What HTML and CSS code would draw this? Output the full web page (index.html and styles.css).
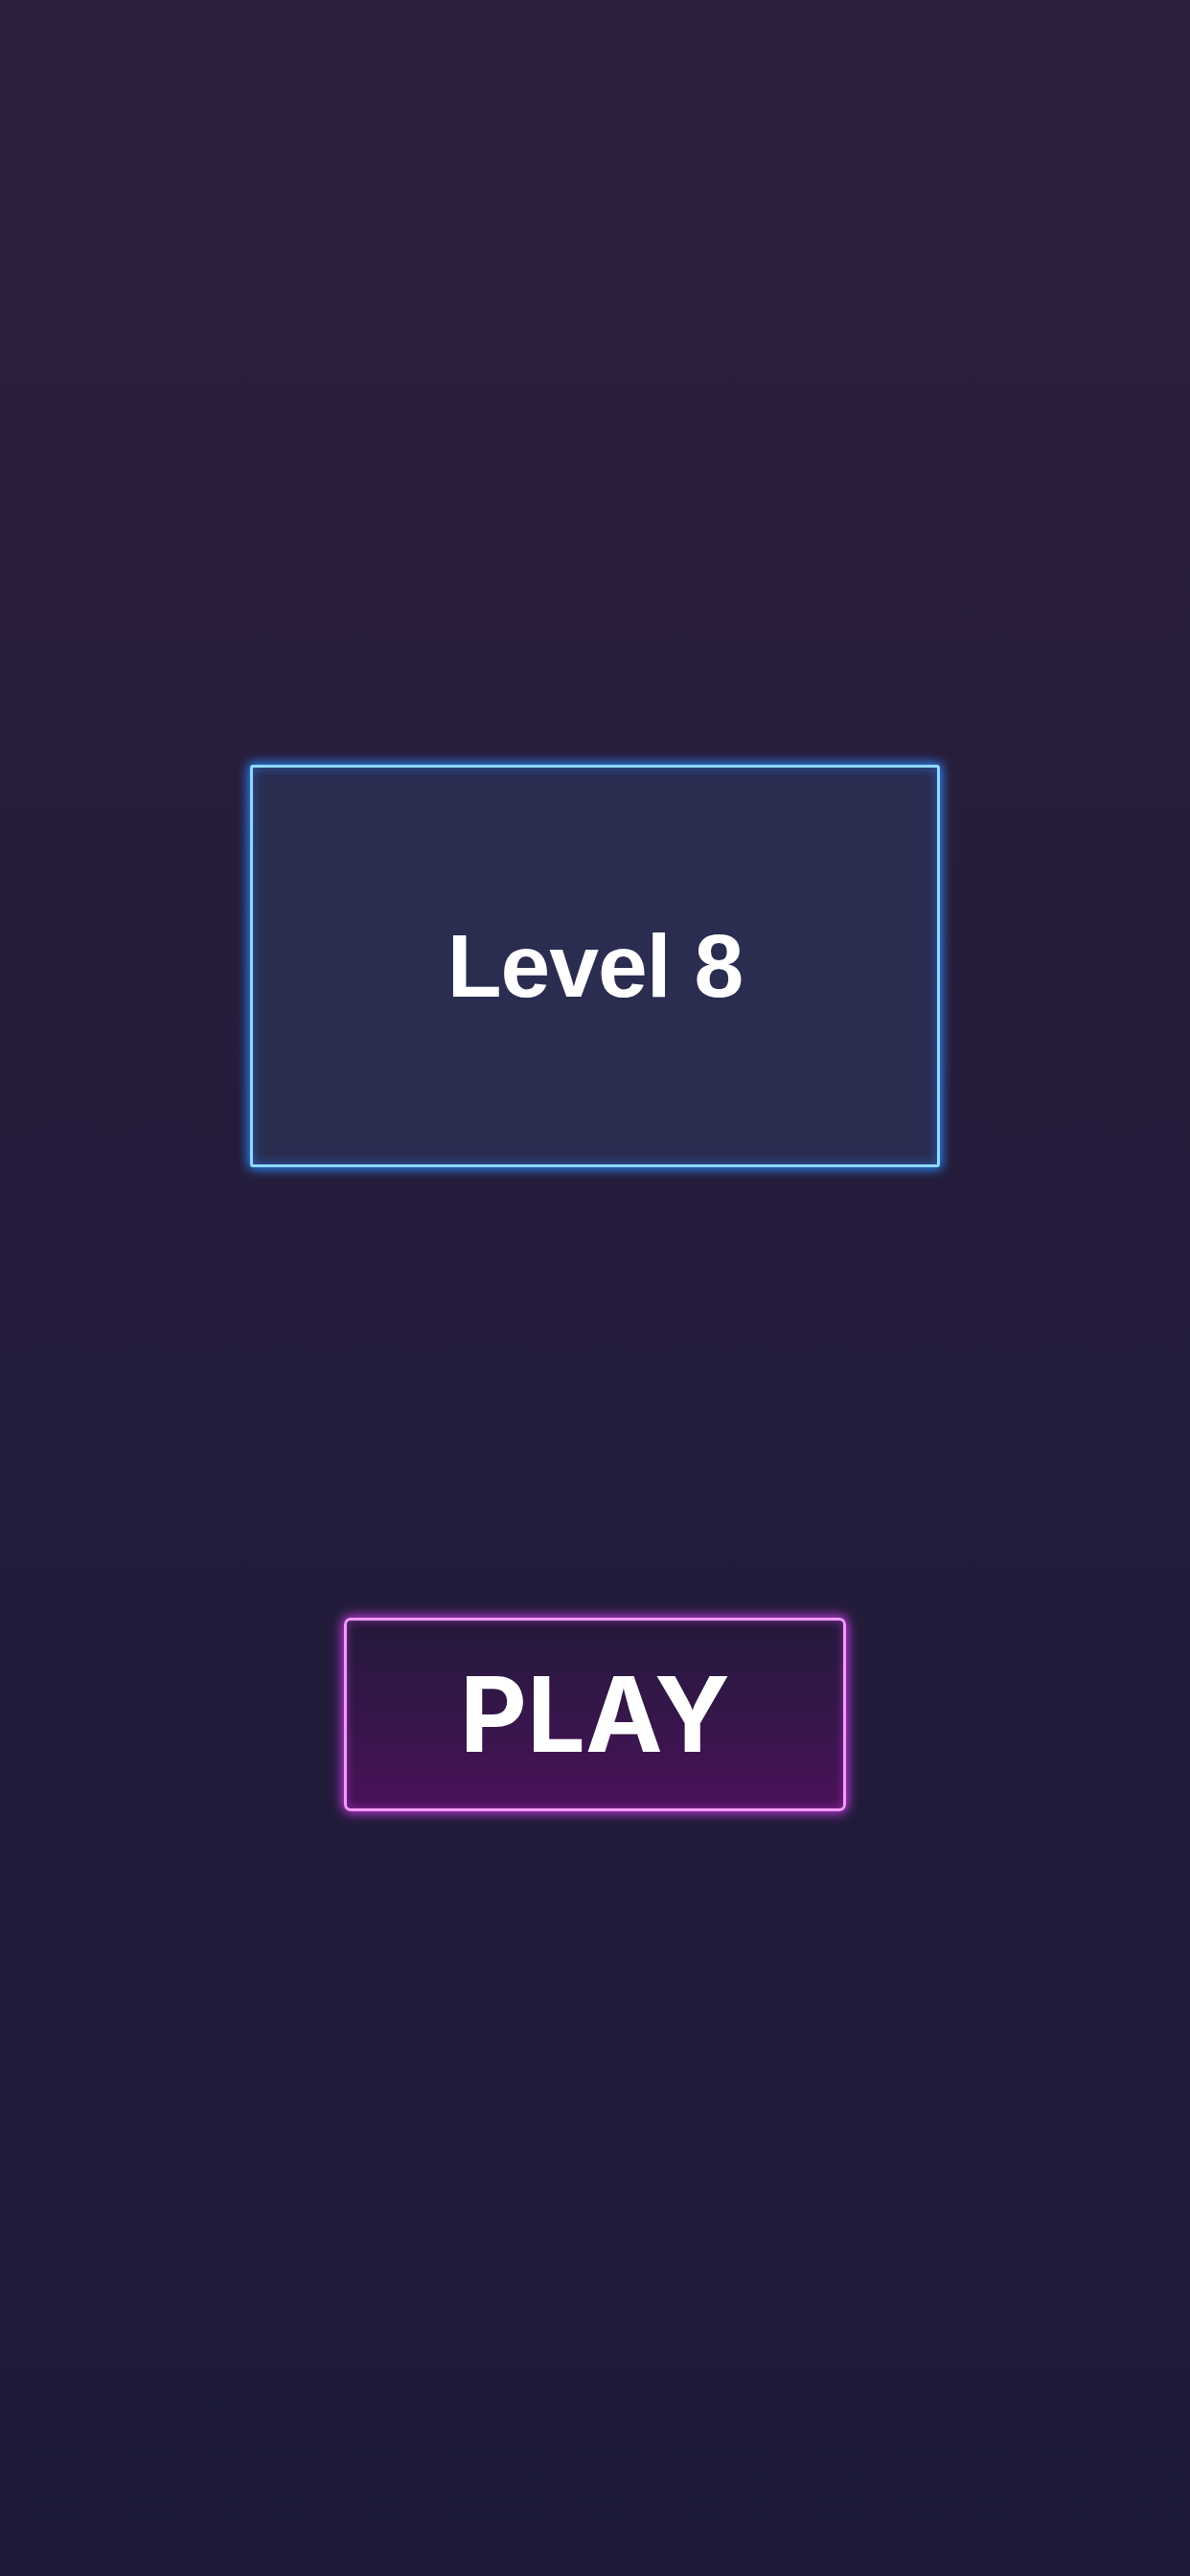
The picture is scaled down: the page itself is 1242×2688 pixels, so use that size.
FILE: index.html
```html
<!DOCTYPE html>
<html lang="en">
<head>
	<meta charset="UTF-8">
	<title>Level 8</title>
	<link rel="stylesheet" href="styles.css">
</head>
<body>
	<div class="screen">
		<div class="level-card">
			<h1>Level 8</h1>
		</div>
		<button class="play-btn" type="button">PLAY</button>
	</div>
</body>
</html>
```

FILE: styles.css
```css
body, h1 {
	margin: 0;
	padding: 0;
}

body {
	min-height: 2688px;
	background: linear-gradient(180deg, #2e1f3d 0%, #241c3a 45%, #1d1a3a 100%);
	font-family: "Liberation Sans", Arial, sans-serif;
	color: #FFF;
}

.screen {
	display: flex;
	flex-direction: column;
	align-items: center;
	padding-top: 798px;
}

/* 关卡卡片 - 蓝色霓虹边框 */
.level-card {
	width: 720px;
	height: 420px;
	box-sizing: border-box;
	display: flex;
	align-items: center;
	justify-content: center;
	background-color: #2a2c50;
	border: 3px solid #8fd8ff;
	border-radius: 3px;
	box-shadow: 0 0 12px 2px #2a8cff,
				inset 0 0 12px rgba(42, 140, 255, 0.5);
}

.level-card h1 {
	font-size: 93px;
	font-weight: bold;
	line-height: 1;
	letter-spacing: -1px;
}

/* 开始按钮 - 紫色霓虹 */
.play-btn {
	margin-top: 470px;
	width: 524px;
	height: 202px;
	box-sizing: border-box;
	padding: 0;
	border: 3px solid #f39bfa;
	border-radius: 7px;
	background: linear-gradient(180deg, #24193a 0%, #35164a 50%, #4b1159 100%);
	box-shadow: 0 0 12px 2px #c43be0,
				inset 0 0 10px rgba(196, 59, 224, 0.55);
	color: #FFF;
	font-family: Inter, "Liberation Sans", sans-serif;
	font-size: 108px;
	font-weight: bold;
	line-height: 1;
	letter-spacing: 0;
}
```
